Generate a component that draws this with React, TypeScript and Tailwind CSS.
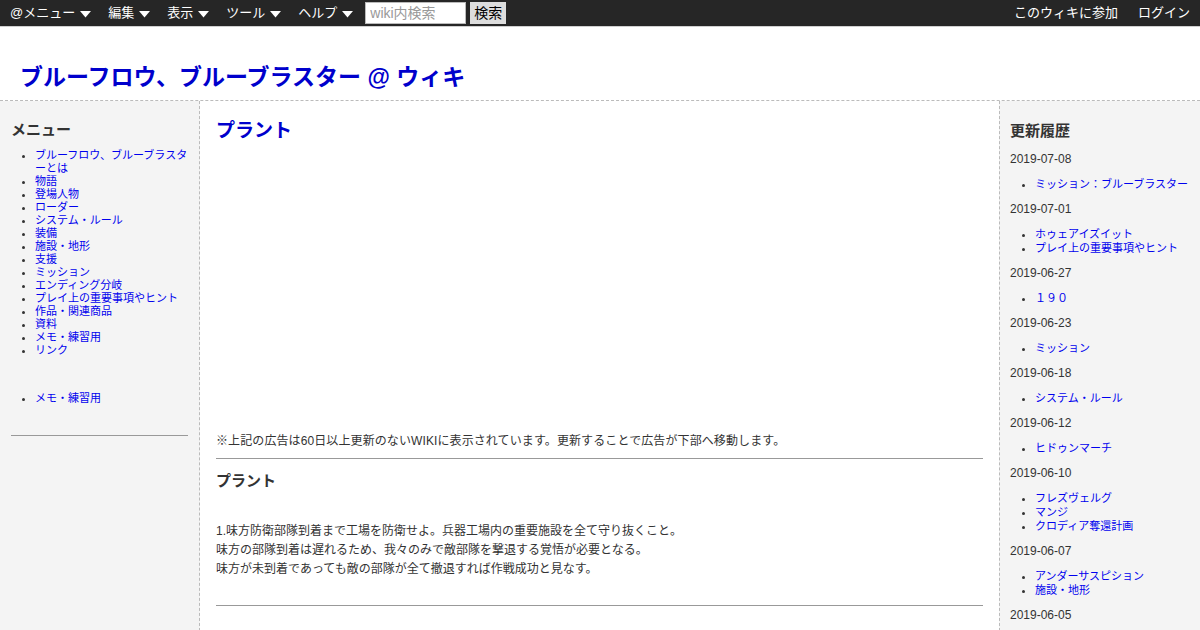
import React from 'react';

const font = 'font-["Liberation_Sans","Noto_Sans_CJK_JP",sans-serif]';

const menuItems = [
    'ブルーフロウ、ブルーブラスターとは',
    '物語',
    '登場人物',
    'ローダー',
    'システム・ルール',
    '装備',
    '施設・地形',
    '支援',
    'ミッション',
    'エンディング分岐',
    'プレイ上の重要事項やヒント',
    '作品・関連商品',
    '資料',
    'メモ・練習用',
    'リンク',
];

const history: { date: string; pages: string[] }[] = [
    { date: '2019-07-08', pages: ['ミッション：ブルーブラスター'] },
    { date: '2019-07-01', pages: ['ホゥェアイズイット', 'プレイ上の重要事項やヒント'] },
    { date: '2019-06-27', pages: ['１９０'] },
    { date: '2019-06-23', pages: ['ミッション'] },
    { date: '2019-06-18', pages: ['システム・ルール'] },
    { date: '2019-06-12', pages: ['ヒドゥンマーチ'] },
    { date: '2019-06-10', pages: ['フレズヴェルグ', 'マンジ', 'クロディア奪還計画'] },
    { date: '2019-06-07', pages: ['アンダーサスピション', '施設・地形'] },
    { date: '2019-06-05', pages: [] },
];

function Caret() {
    return (
        <svg width="11" height="7" viewBox="0 0 11 7" className="ml-[5px] mt-[2px]">
            <path d="M0 0 L11 0 L5.5 6.5 Z" fill="#fff" />
        </svg>
    );
}

function TopBar() {
    const menus = ['@メニュー', '編集', '表示', 'ツール', 'ヘルプ'];
    return (
        <div className="flex h-[27px] items-center justify-between border-b border-[#cfcfcf] bg-[#262626] pl-[10px] pr-[10px] text-[13px] text-white">
            <div className="flex items-center">
                {menus.map((m) => (
                    <span key={m} className="mr-[17px] flex items-center">
                        {m}
                        <Caret />
                    </span>
                ))}
                <input
                    placeholder="wiki内検索"
                    className="ml-[-5px] h-[22px] w-[101px] border border-[#bbb] bg-white px-[4px] text-[14px] text-black placeholder:text-[#999]"
                />
                <button className="ml-[4px] h-[22px] bg-[#dddddd] px-[4px] text-[14px] text-black">検索</button>
            </div>
            <div className="flex items-center gap-[20px]">
                <span>このウィキに参加</span>
                <span>ログイン</span>
            </div>
        </div>
    );
}

export default function App() {
    return (
        <div className={`${font} h-[630px] w-[1200px] overflow-hidden bg-white text-[#333]`}>
            <TopBar />
            <header className="flex h-[73px] items-end pb-[9px] pl-[20px]">
                <h1 className="text-[23px] font-bold leading-[28px] text-[#0000cc]">ブルーフロウ、ブルーブラスター @ ウィキ</h1>
            </header>

            <div className="grid grid-cols-[200px_799px_201px] border-t border-dashed border-[#bbb]">
                <aside className="h-[530px] border-r border-dashed border-[#bbb] bg-[#f4f4f4] px-[11px]">
                    <h3 className="mt-[19px] text-[15px] font-bold leading-[20px] text-[#333]">メニュー</h3>
                    <ul className="mt-[9px] list-disc pl-[24px] text-[11px] leading-[13px] text-[#0000ee] marker:text-[#333]">
                        {menuItems.map((i) => (
                            <li key={i}>{i}</li>
                        ))}
                    </ul>
                    <ul className="mt-[35px] list-disc pl-[24px] text-[11px] leading-[13px] text-[#0000ee] marker:text-[#333]">
                        <li>メモ・練習用</li>
                    </ul>
                    <hr className="mt-[30px] border-t border-[#999]" />
                </aside>

                <main className="px-[16px]">
                    <h2 className="mt-[16px] text-[19px] font-bold leading-[28px] text-[#0000cc]">プラント</h2>
                    <div className="h-[287px]" />
                    <p className="text-[12px] leading-[18px] tracking-[0.1px] text-[#333]">
                        ※上記の広告は60日以上更新のないWIKIに表示されています。更新することで広告が下部へ移動します。
                    </p>
                    <hr className="mt-[8px] border-t border-[#999]" />
                    <h3 className="mt-[10px] text-[15px] font-bold leading-[24px] text-[#333]">プラント</h3>
                    <div className="mt-[29px] text-[12px] leading-[19px] text-[#333]">
                        <p>1.味方防衛部隊到着まで工場を防衛せよ。兵器工場内の重要施設を全て守り抜くこと。</p>
                        <p>味方の部隊到着は遅れるため、我々のみで敵部隊を撃退する覚悟が必要となる。</p>
                        <p>味方が未到着であっても敵の部隊が全て撤退すれば作戦成功と見なす。</p>
                    </div>
                    <hr className="mt-[26px] border-t border-[#999]" />
                </main>

                <aside className="h-[530px] border-l border-dashed border-[#bbb] bg-[#f4f4f4] px-[10px]">
                    <h3 className="mt-[20px] text-[15px] font-bold leading-[20px] text-[#333]">更新履歴</h3>
                    <div className="mt-[11px]">
                        {history.map((h) => (
                            <div key={h.date} className="mb-[11px]">
                                <p className="text-[12px] leading-[14px] text-[#333]">{h.date}</p>
                                {h.pages.length > 0 && (
                                    <ul className="mt-[11px] list-disc pl-[25px] text-[11px] leading-[14px] text-[#0000ee] marker:text-[#333]">
                                        {h.pages.map((p) => (
                                            <li key={p}>{p}</li>
                                        ))}
                                    </ul>
                                )}
                            </div>
                        ))}
                    </div>
                </aside>
            </div>
        </div>
    );
}
